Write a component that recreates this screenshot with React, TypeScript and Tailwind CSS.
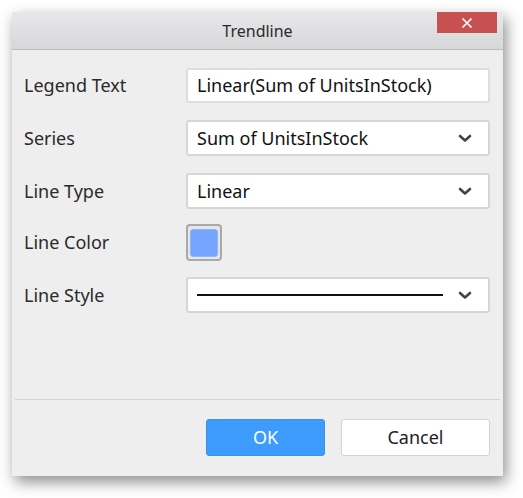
import React from "react";

const font = { fontFamily: '"Noto Sans", "Open Sans", sans-serif' };

function Chevron() {
  return (
    <svg width="14" height="9" viewBox="0 0 14 9" aria-hidden="true">
      <path d="M2 2L7 6.5L12 2" fill="none" stroke="#444" strokeWidth="2.6" strokeLinecap="round" strokeLinejoin="round" />
    </svg>
  );
}

function Row({ label, children, className = "" }: { label: string; children: React.ReactNode; className?: string }) {
  return (
    <div className={`flex items-center ${className}`}>
      <div className="w-[162px] shrink-0 text-[18px] text-[#2a2a2a]">{label}</div>
      {children}
    </div>
  );
}

function Select({ children }: { children: React.ReactNode }) {
  return (
    <div className="flex h-[36px] w-[304px] items-center justify-between rounded-[3px] border-2 border-[#d6d6d6] bg-white pl-[9px] pr-[16px] text-[18px] text-[#111]">
      {children}
      <Chevron />
    </div>
  );
}

export default function App() {
  return (
    <div className="h-[498px] w-[523px] bg-white pl-[12px] pt-[12px]" style={font}>
      <div className="flex h-[464px] w-[491px] flex-col bg-[#eeeeee] shadow-[3px_6px_14px_rgba(0,0,0,0.45)]">
        {/* Title bar */}
        <div className="relative flex h-[38px] shrink-0 items-center justify-center border-b border-[#bdbdbd] bg-gradient-to-b from-[#e8e7ea] to-[#d7d6d9]">
          <span className="text-[16px] text-[#2b2b2b]">Trendline</span>
          <div className="absolute right-[6px] top-0 flex h-[21px] w-[60px] items-center justify-center bg-[#c75050]">
            <svg width="12" height="12" viewBox="0 0 12 12" aria-hidden="true">
              <path d="M1.5 1.5L10.5 10.5M10.5 1.5L1.5 10.5" stroke="#fff" strokeWidth="1.6" />
            </svg>
          </div>
        </div>

        {/* Form */}
        <div className="flex flex-1 flex-col pl-[12px] pt-[18px]">
          <Row label="Legend Text">
            <div className="flex h-[35px] w-[304px] items-center rounded-[3px] border-2 border-[#dedede] bg-white pl-[9px] text-[18px] text-[#111]">
              Linear(Sum of UnitsInStock)
            </div>
          </Row>
          <Row label="Series" className="mt-[17px]">
            <Select>Sum of UnitsInStock</Select>
          </Row>
          <Row label="Line Type" className="mt-[17px]">
            <Select>Linear</Select>
          </Row>
          <Row label="Line Color" className="mt-[15px]">
            <div className="flex h-[37px] w-[36px] items-center justify-center rounded-[4px] border-2 border-[#a9a9a9] bg-[#e6e6e6]">
              <div className="h-[28px] w-[28px] rounded-[3px] border border-[#8fb5ff] bg-[#75a5ff]" />
            </div>
          </Row>
          <Row label="Line Style" className="mt-[16px]">
            <Select>
              <div className="mr-[15px] h-[2px] flex-1 bg-[#111]" />
            </Select>
          </Row>
        </div>

        {/* Footer */}
        <div className="mx-[3px] flex h-[77px] shrink-0 items-start justify-end gap-[16px] border-t border-[#d4d4d4] pr-[10px] pt-[19px]">
          <button className="flex h-[37px] w-[119px] items-center justify-center rounded-[3px] border border-[#3f8fe6] bg-[#3d9bfd] text-[18px] text-white">
            OK
          </button>
          <button className="flex h-[37px] w-[149px] items-center justify-center rounded-[3px] border border-[#d3d3d3] bg-white text-[18px] text-[#222]">
            Cancel
          </button>
        </div>
      </div>
    </div>
  );
}
